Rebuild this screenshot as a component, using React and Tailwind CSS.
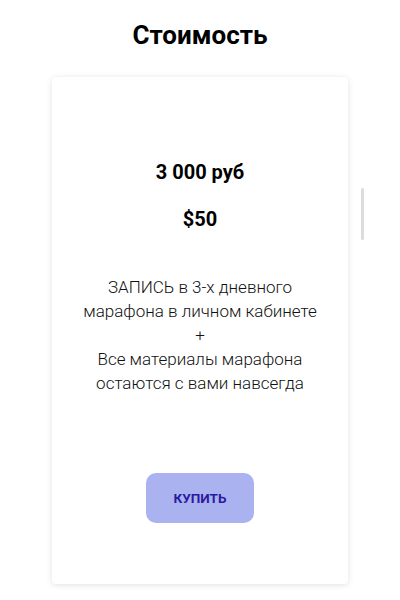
export default function App() {
  return (
    <div className="relative w-[400px] h-[600px] bg-white overflow-hidden" style={{ fontFamily: 'Roboto, "Liberation Sans", sans-serif' }}>
      <h1 className="pt-[19px] text-center text-[26px] leading-[32px] font-bold text-black">Стоимость</h1>

      {/* Card */}
      <div className="mt-[26px] ml-[52px] w-[296px] h-[507px] rounded-[4px] bg-white shadow-[0_1px_6px_rgba(0,0,0,0.12)] flex flex-col items-center">
        <div className="mt-[82px] text-[20px] leading-[26px] font-bold text-black">3 000 руб</div>
        <div className="mt-[21px] text-[20px] leading-[26px] font-bold text-black">$50</div>
        <div className="mt-[43px] text-center text-[17px] leading-[24px] font-light text-[#111]">
          ЗАПИСЬ в 3-х дневного
          <br />
          марафона в личном кабинете
          <br />
          +
          <br />
          Все материалы марафона
          <br />
          остаются с вами навсегда
        </div>
        <button className="mt-[78px] w-[108px] h-[50px] rounded-[10px] bg-[#aab3f0] text-[13.5px] font-bold text-[#2b1aa0]">
          КУПИТЬ
        </button>
      </div>

      {/* Scroll indicator */}
      <div className="absolute left-[361px] top-[188px] w-[3px] h-[52px] rounded-full bg-[#dcdcdc]" />
    </div>
  )
}
